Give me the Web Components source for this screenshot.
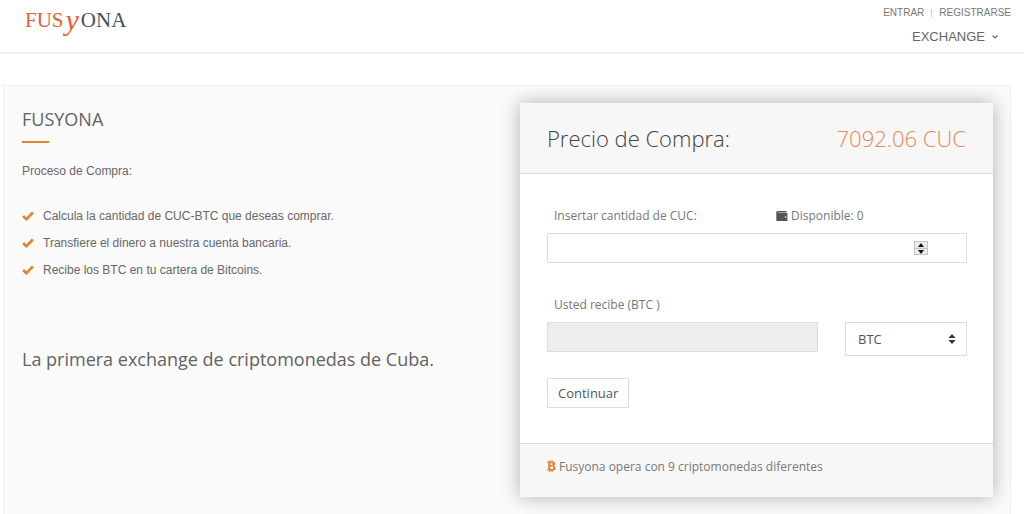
<!DOCTYPE html>
<html lang="es">
<head>
	<meta charset="utf-8">
	<meta name="viewport" content="width=device-width, initial-scale=1">
	<title>Fusyona</title>
	<style>
		:root {
			--color-accent: #e08435;
			--color-price: #e18a55;
			--color-heading: #636363;
			--color-text: #686868;
			--color-label: #777;
			--color-border: #ddd;
			--color-bg-light: #f7f7f7;
			--font-sans: 'Liberation Sans', Arial, sans-serif;
			--font-open: 'Open Sans', 'Noto Sans', sans-serif;
		}

		body {
			margin: 0;
			background: #fff;
			color: var(--color-text);
			font-family: var(--font-sans);
			font-size: 12px;
		}
	</style>
</head>
<body>
	<fy-header></fy-header>
	<fy-exchange>
		<fy-process>
			<span slot="title">FUSYONA</span>
			<span slot="lead">Proceso de Compra:</span>
			<fy-step>Calcula la cantidad de CUC-BTC que deseas comprar.</fy-step>
			<fy-step>Transfiere el dinero a nuestra cuenta bancaria.</fy-step>
			<fy-step>Recibe los BTC en tu cartera de Bitcoins.</fy-step>
			<span slot="tagline">La primera exchange de criptomonedas de Cuba.</span>
		</fy-process>
		<fy-card>
			<span slot="title">Precio de Compra:</span>
			<span slot="price">7092.06 CUC</span>
			<fy-form></fy-form>
			<span slot="footer">Fusyona opera con 9 criptomonedas diferentes</span>
		</fy-card>
	</fy-exchange>

	<script>
	(() => {
		const icons = {
			check: { box: '0 0 12 10', path: '<path d="M1.1 5 4.3 8.1 10.9 1.5" fill="none" stroke="currentColor" stroke-width="2.7"/>' },
			wallet: { box: '0 0 12 12', path: '<path d="M1.5 1H10.5V2.4H1.8V3H11.4V11H1.2Q.3 11 .3 10V2.2Q.3 1 1.5 1Z" fill="currentColor"/><circle cx="9.6" cy="7" r=".8" fill="#fff"/>' },
			bitcoin: { box: '0 0 9 12', path: '<path d="M.3 1.6H5Q8.1 1.6 8.1 3.9 8.1 5.3 6.9 5.8 8.7 6.2 8.7 8 8.7 10.6 5.2 10.6H.3V9.1H1.2V3.1H.3ZM3.4 3.2V5.1H4.5Q5.8 5.1 5.8 4.1 5.8 3.2 4.6 3.2ZM3.4 6.6V9H4.8Q6.3 9 6.3 7.8 6.3 6.6 4.8 6.6ZM2.3.2H3.5V1.6H2.3ZM4.5.2H5.7V1.6H4.5ZM2.3 10.6H3.5V12H2.3ZM4.5 10.6H5.7V12H4.5Z" fill="currentColor" fill-rule="evenodd"/>' },
			chevron: { box: '0 0 8 6', path: '<path d="M1.5 1.5 4 4 6.5 1.5" fill="none" stroke="currentColor" stroke-width="1.1"/>' },
			updown: { box: '0 0 8 10', path: '<path d="M4 0 7.6 4H.4ZM4 10 .4 6H7.6Z" fill="currentColor"/>' },
			up: { box: '0 0 6 4', path: '<path d="M3 0 6 4H0Z" fill="currentColor"/>' },
			down: { box: '0 0 6 4', path: '<path d="M3 4 0 0H6Z" fill="currentColor"/>' }
		};

		function define(name, styles, markup, setup) {
			const template = document.createElement('template');
			template.innerHTML = `<style>*, *::before { box-sizing: border-box; } ${styles}</style>${markup}`;

			customElements.define(name, class extends HTMLElement {
				constructor() {
					super();
					this.attachShadow({ mode: 'open' });
					this.shadowRoot.appendChild(template.content.cloneNode(true));
					if (setup) setup(this.shadowRoot);
				}
			});
		}

		customElements.define('fy-icon',
			class Icon extends HTMLElement {
				static get observedAttributes() {
					return [ 'name' ];
				}

				constructor() {
					super();
					this.attachShadow({ mode: 'open' });
				}

				attributeChangedCallback(attr, old_value, new_value) {
					const icon = icons[new_value];
					this.shadowRoot.innerHTML = `
						<style>
							:host { display: inline-flex; flex: none; width: 12px; }
							svg { display: block; width: 100%; }
						</style>
						<svg viewBox="${icon.box}" aria-hidden="true">${icon.path}</svg>
					`;
				}
			}
		);

		define('fy-header', `
			:host {
				display: block;
				border-bottom: 2px solid #f0f0f0;
			}

			header {
				display: flex;
				justify-content: space-between;
				align-items: flex-start;
				height: 52px;
				padding: 0 13px 0 25px;
			}

			a {
				color: inherit;
				text-decoration: none;
			}

			/* centred rather than on the baseline, so that the larger y hangs below the capitals */
			.logo {
				display: flex;
				align-items: center;
				gap: 2px;
				font-family: 'Liberation Serif', 'Times New Roman', serif;
				font-size: 21px;
				line-height: 40px;
				color: #45525e;
			}

			.logo .warm {
				color: #e2603c;
			}

			.logo .swash {
				font-size: 30px;
				font-style: italic;
				color: #e8602e;
			}

			nav {
				display: flex;
				flex-direction: column;
				align-items: flex-end;
				gap: 8px;
				padding-top: 7px;
				color: #777;
			}

			.account {
				display: flex;
				align-items: center;
				gap: 7px;
				font-size: 10px;
				line-height: 12px;
			}

			.account i {
				width: 1px;
				height: 8px;
				background: #ccc;
			}

			.menu {
				display: flex;
				align-items: center;
				gap: 6px;
				padding-right: 12px;
				font-size: 13px;
				line-height: 20px;
				color: #666;
			}

			.menu fy-icon {
				width: 8px;
			}
		`, `
			<header>
				<a class="logo" href="#"><span class="warm">FUS</span><span class="swash">y</span><span>ONA</span></a>
				<nav>
					<div class="account">
						<a href="#entrar">ENTRAR</a><i></i><a href="#registrarse">REGISTRARSE</a>
					</div>
					<a class="menu" href="#exchange">EXCHANGE <fy-icon name="chevron"></fy-icon></a>
				</nav>
			</header>
		`);

		define('fy-exchange', `
			:host {
				display: grid;
				grid-template-columns: 1fr 1fr;
				gap: 25px;
				align-items: start;
				box-sizing: border-box;
				margin: 31px 13px 0 3px;
				padding: 17px 17px 17px 18px;
				background: #fafafa;
				border: 1px solid #f0f0f0;
				border-bottom: 0;
			}
		`, `<slot></slot>`);

		define('fy-process', `
			:host {
				display: block;
			}

			h2, h3, p {
				margin: 0;
				font-weight: 400;
			}

			h2, h3 {
				font-family: var(--font-open);
				font-size: 18px;
				line-height: 24px;
				color: var(--color-heading);
			}

			h2 {
				padding-top: 4px;
			}

			h2::after {
				content: '';
				display: block;
				width: 27px;
				height: 2px;
				margin-top: 10px;
				background: var(--color-accent);
			}

			p {
				margin-top: 20px;
				line-height: 16px;
			}

			.steps {
				display: grid;
				gap: 11px;
				margin: 29px 0 69px;
			}
		`, `
			<h2><slot name="title"></slot></h2>
			<p><slot name="lead"></slot></p>
			<div class="steps" role="list"><slot></slot></div>
			<h3><slot name="tagline"></slot></h3>
		`);

		define('fy-step', `
			:host {
				display: flex;
				align-items: center;
				gap: 9px;
				line-height: 16px;
			}

			fy-icon {
				color: var(--color-accent);
			}
		`, `<fy-icon name="check"></fy-icon><span role="listitem"><slot></slot></span>`);

		define('fy-card', `
			:host {
				display: block;
				background: #fff;
				box-shadow: 0 0 18px rgba(0, 0, 0, .3);
				font-family: var(--font-open);
			}

			header, footer {
				display: flex;
				align-items: center;
				padding: 0 27px;
				background: var(--color-bg-light);
			}

			header {
				justify-content: space-between;
				height: 71px;
				border-bottom: 1px solid var(--color-border);
				font-size: 22px;
				font-weight: 300;
			}

			h2 {
				margin: 0;
				font: inherit;
				color: #444;
			}

			.price {
				color: var(--color-price);
			}

			footer {
				gap: 3px;
				padding-bottom: 9px;
				height: 54px;
				border-top: 1px solid var(--color-border);
				color: var(--color-label);
			}

			footer fy-icon {
				width: 9px;
				color: var(--color-accent);
			}
		`, `
			<header>
				<h2><slot name="title"></slot></h2>
				<span class="price"><slot name="price"></slot></span>
			</header>
			<slot></slot>
			<footer><fy-icon name="bitcoin"></fy-icon><slot name="footer"></slot></footer>
		`);

		define('fy-form', `
			:host {
				display: block;
				padding: 33px 26px 35px 27px;
				color: var(--color-label);
			}

			form {
				display: grid;
				gap: 9px;
			}

			.labels {
				display: grid;
				grid-template-columns: 222px 1fr;
				padding-left: 7px;
				line-height: 17px;
			}

			.labels.receive {
				margin-top: 24px;
			}

			.balance {
				display: flex;
				align-items: center;
				gap: 3px;
			}

			.balance fy-icon {
				color: #555;
			}

			input, select, button {
				margin: 0;
				border-radius: 0;
				font-family: inherit;
				font-size: 13px;
				color: #555;
			}

			.amount {
				display: flex;
				align-items: center;
				height: 30px;
				padding-right: 38px;
				background: #fff;
				border: 1px solid var(--color-border);
			}

			.amount input {
				flex: 1;
				min-width: 0;
				height: 100%;
				padding: 0 10px;
				border: 0;
				outline: 0;
				background: none;
				appearance: textfield;
			}

			.amount input::-webkit-inner-spin-button {
				appearance: none;
			}

			.spin {
				display: grid;
				grid-template-rows: 6px 6px;
				width: 14px;
				border: 1px solid #c4c4c4;
				background: #ececec;
			}

			.spin button {
				display: flex;
				align-items: center;
				justify-content: center;
				padding: 0;
				border: 0;
				background: none;
				color: #111;
			}

			.spin button + button {
				border-top: 1px solid #c4c4c4;
			}

			.spin fy-icon {
				width: 6px;
			}

			.row {
				display: grid;
				grid-template-columns: 1fr 122px;
				gap: 27px;
				align-items: start;
			}

			#receive {
				width: 100%;
				height: 30px;
				padding: 0 10px;
				border: 1px solid var(--color-border);
				background: #ededed;
			}

			.select {
				position: relative;
			}

			select {
				display: block;
				width: 100%;
				height: 34px;
				padding: 0 12px;
				border: 1px solid var(--color-border);
				background: #fff;
				appearance: none;
			}

			.select fy-icon {
				position: absolute;
				top: 12px;
				right: 11px;
				width: 8px;
				color: #333;
				pointer-events: none;
			}

			.submit {
				justify-self: start;
				height: 30px;
				margin-top: 13px;
				padding: 0 10px;
				border: 1px solid var(--color-border);
				background: #fff;
			}
		`, `
			<form>
				<div class="labels">
					<label for="amount">Insertar cantidad de CUC:</label>
					<span class="balance"><fy-icon name="wallet"></fy-icon>Disponible: 0</span>
				</div>
				<div class="amount">
					<input id="amount" type="number" min="0">
					<div class="spin">
						<button type="button" class="more" aria-label="Aumentar"><fy-icon name="up"></fy-icon></button>
						<button type="button" class="less" aria-label="Disminuir"><fy-icon name="down"></fy-icon></button>
					</div>
				</div>
				<div class="labels receive">
					<label for="receive">Usted recibe (BTC )</label>
				</div>
				<div class="row">
					<input id="receive" type="text" readonly>
					<div class="select">
						<select aria-label="Criptomoneda"><option>BTC</option></select>
						<fy-icon name="updown"></fy-icon>
					</div>
				</div>
				<button class="submit" type="submit">Continuar</button>
			</form>
		`, root => {
			const amount = root.querySelector('#amount');
			root.querySelector('.more').addEventListener('click', () => amount.stepUp());
			root.querySelector('.less').addEventListener('click', () => amount.stepDown());
			root.querySelector('form').addEventListener('submit', e => e.preventDefault());
		});
	})();
	</script>
</body>
</html>
